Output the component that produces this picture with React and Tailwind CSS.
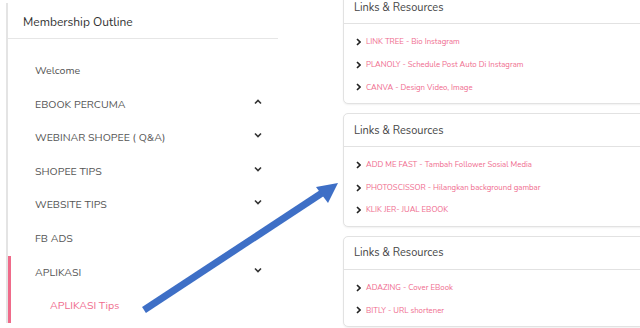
import React from "react";

const font = { fontFamily: "Nunito, Lato, 'Open Sans', sans-serif" };

function Down() {
  return (
    <svg width="8" height="6" viewBox="0 0 8 6" className="text-[#333]">
      <polyline points="1,1.5 4,4.5 7,1.5" fill="none" stroke="currentColor" strokeWidth="1.6" />
    </svg>
  );
}
function Up() {
  return (
    <svg width="8" height="6" viewBox="0 0 8 6" className="text-[#333]">
      <polyline points="1,4.5 4,1.5 7,4.5" fill="none" stroke="currentColor" strokeWidth="1.6" />
    </svg>
  );
}
function Right() {
  return (
    <svg width="5" height="8" viewBox="0 0 5 8" className="text-[#222] shrink-0">
      <polyline points="1,1 4,4 1,7" fill="none" stroke="currentColor" strokeWidth="1.6" />
    </svg>
  );
}

function MenuItem({ label, icon }) {
  return (
    <div className="h-[33.6px] flex items-center pl-[27px] pr-[16px] text-[10.6px] text-[#555]">
      <span className="flex-1">{label}</span>
      {icon === "up" && <span className="-mt-[6px]"><Up /></span>}
      {icon === "down" && <span className="-mt-[6px]"><Down /></span>}
    </div>
  );
}

function Card({ items, className = "" }) {
  return (
    <div className={"border border-[#e2e2e2] rounded-[5px] bg-white shadow-[0_1px_2px_rgba(0,0,0,0.06)] " + className}>
      <div className="h-[33px] flex items-center pl-[10px] pt-[2px] border-b border-[#e2e2e2] text-[11px] text-[#444]">
        Links &amp; Resources
      </div>
      <div className="pt-[7px] pb-[4px]">
        {items.map((t) => (
          <div key={t} className="h-[22.6px] flex items-center pl-[12px] gap-[5px] text-[7.8px] text-[#ef6b8e]">
            <Right />
            <span>{t}</span>
          </div>
        ))}
      </div>
    </div>
  );
}

export default function App() {
  return (
    <div className="w-[640px] h-[328px] bg-white relative overflow-hidden flex" style={font}>
      <div className="ml-[6px] mt-[3px] w-[272px] h-[320px] border-l-2 border-[#e4e4e4] flex flex-col">
        <div className="h-[42px] flex items-center pl-[15px] pt-[3px] border-b border-[#e6e6e6] text-[12px] text-[#333]">
          Membership Outline
        </div>
        <div className="pt-[15px]">
          <MenuItem label="Welcome" />
          <MenuItem label="EBOOK PERCUMA" icon="up" />
          <MenuItem label="WEBINAR SHOPEE ( Q&A)" icon="down" />
          <MenuItem label="SHOPEE TIPS" icon="down" />
          <MenuItem label="WEBSITE TIPS" icon="down" />
          <MenuItem label="FB ADS" />
        </div>
        <div className="border-l-[3px] border-[#ef6b8a] flex-1">
          <div className="h-[33.6px] flex items-center pl-[24px] pr-[16px] text-[10.6px] text-[#555]">
            <span className="flex-1">APLIKASI</span>
            <span className="-mt-[6px]"><Down /></span>
          </div>
          <div className="h-[33.6px] flex items-center pl-[39px] text-[10.6px] text-[#ef6b8e]">
            APLIKASI Tips
          </div>
        </div>
      </div>

      <div className="ml-[65px] -mt-[10px] flex-1 flex flex-col gap-[9px] -mr-[10px]">
        <Card items={["LINK TREE - Bio Instagram", "PLANOLY - Schedule Post Auto Di Instagram", "CANVA - Design Video, Image"]} />
        <Card items={["ADD ME FAST - Tambah Follower Sosial Media", "PHOTOSCISSOR - Hilangkan background gambar", "KLIK JER- JUAL EBOOK"]} />
        <Card items={["ADAZING - Cover EBook", "BITLY - URL shortener"]} />
      </div>

      <svg className="absolute left-0 top-0 pointer-events-none" width="640" height="328" viewBox="0 0 640 328">
        <line x1="144" y1="310" x2="322" y2="193" stroke="#3e6fc6" strokeWidth="7" />
        <polygon points="338,183 316,187 328,203" fill="#3e6fc6" />
      </svg>
    </div>
  );
}
